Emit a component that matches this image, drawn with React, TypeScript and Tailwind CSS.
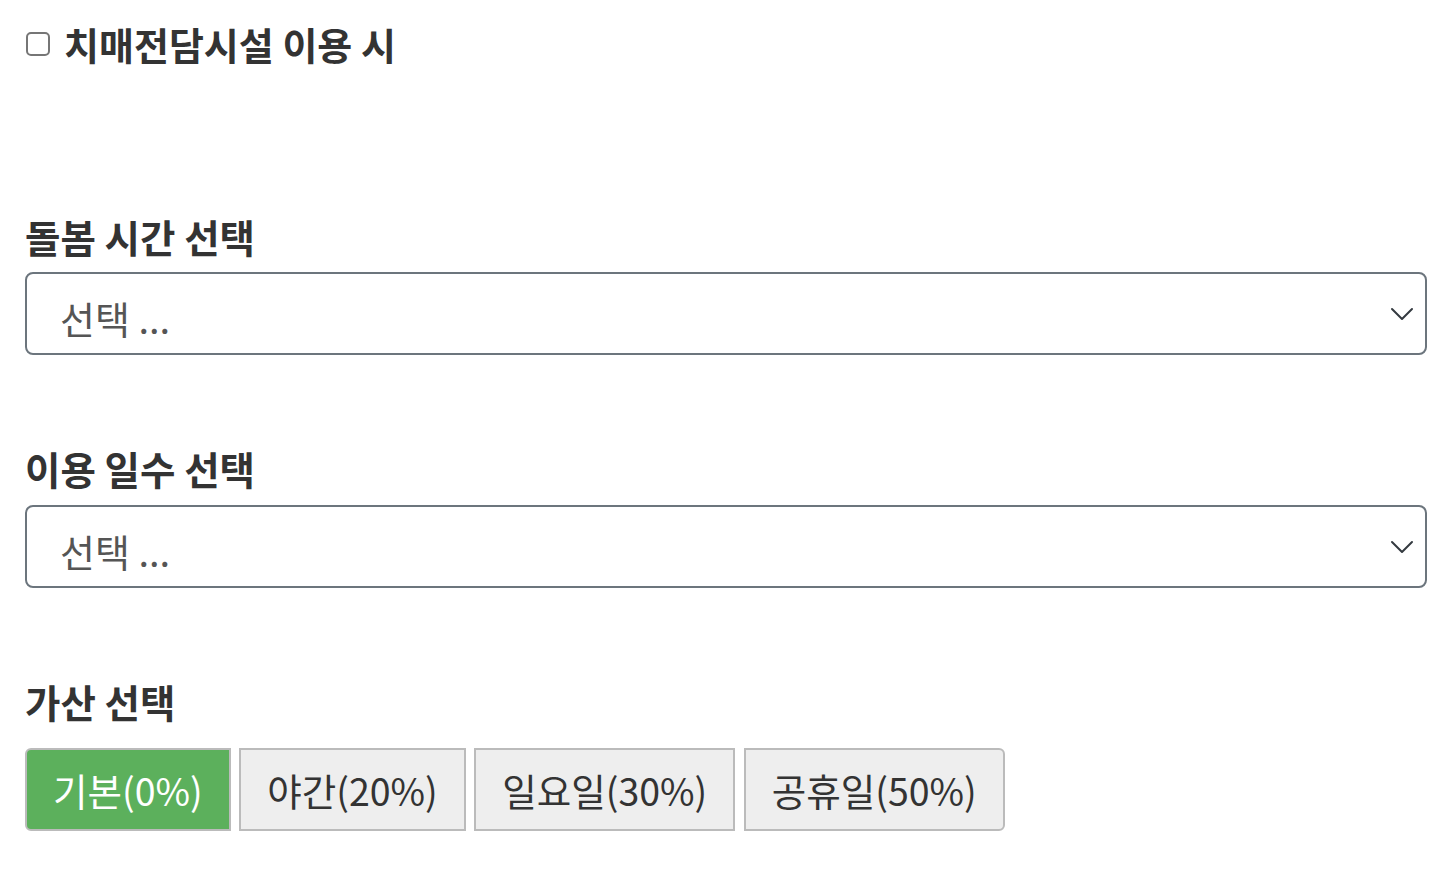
import React, { useState } from 'react';

const FONT = "font-['Noto_Sans_CJK_KR','Noto_Sans',sans-serif]";

const surcharges = ['기본(0%)', '야간(20%)', '일요일(30%)', '공휴일(50%)'];

function FakeSelect() {
  return (
    <div className="flex h-[83px] w-full items-center justify-between rounded-[8px] border-2 border-[#6c757d] bg-white pl-[33px] pr-[11px]">
      <span className="pt-[8px] text-[38px] leading-none text-[#555]">선택 ...</span>
      <svg width="24" height="14" viewBox="0 0 24 14" fill="none">
        <path d="M2 2l10 10L22 2" stroke="#343a40" strokeWidth="2" strokeLinecap="round" strokeLinejoin="round" />
      </svg>
    </div>
  );
}

export default function App() {
  const [checked, setChecked] = useState(false);
  const [picked, setPicked] = useState(0);

  return (
    <div className={`${FONT} min-h-screen bg-white px-[25px] pr-[26px] text-[#333]`}>
      <label className="flex h-[54px] items-center pt-[17px] box-content">
        <input
          type="checkbox"
          checked={checked}
          onChange={(e) => setChecked(e.target.checked)}
          className="ml-[1px] h-[24px] w-[24px] appearance-none rounded-[5px] border-2 border-[#767676] bg-white"
        />
        <span className="ml-[14px] text-[38px] font-bold leading-[54px]">치매전담시설 이용 시</span>
      </label>

      <div className="mt-[138px] text-[38.5px] font-bold leading-[54px]">돌봄 시간 선택</div>
      <div className="mt-[9px]">
        <FakeSelect />
      </div>

      <div className="mt-[86px] text-[38.5px] font-bold leading-[54px]">이용 일수 선택</div>
      <div className="mt-[10px]">
        <FakeSelect />
      </div>

      <div className="mt-[86px] text-[38.5px] font-bold leading-[54px]">가산 선택</div>
      <div className="mt-[20px] flex gap-[8.5px]">
        {surcharges.map((s, i) => (
          <button
            key={s}
            onClick={() => setPicked(i)}
            className={
              'h-[83px] border-2 px-[26px] text-[37.5px] leading-none ' +
              (i === 0 ? 'rounded-l-[6px] ' : '') +
              (i === surcharges.length - 1 ? 'rounded-r-[6px] ' : '') +
              (picked === i
                ? 'border-[#bbb] bg-[#5cb05c] text-white'
                : 'border-[#bbb] bg-[#eee] text-[#333]')
            }
          >
            {s}
          </button>
        ))}
      </div>
    </div>
  );
}
